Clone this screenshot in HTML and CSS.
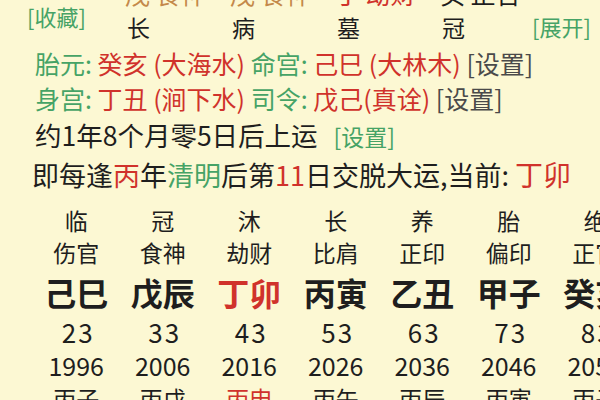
FILE: index.html
```html
<!DOCTYPE html>
<html>
<head>
    <meta charset="utf-8">
    <title>排盘</title>
    <link rel="stylesheet" href="styles.css">
</head>
<body>
    <div class="chart">
        <div class="pillars">
            <a class="link fav">[收藏]</a>
            <div class="tail c1 brown">戊 食神</div>
            <div class="tail c2 brown">戊 食神</div>
            <div class="tail c3 red">丁 劫财</div>
            <div class="tail c4">癸 正官</div>
            <div class="stage c1">长</div>
            <div class="stage c2">病</div>
            <div class="stage c3">墓</div>
            <div class="stage c4">冠</div>
            <a class="link expand">[展开]</a>
        </div>

        <div class="info">
            <div class="line l1"><span class="green">胎元:</span> <span class="red">癸亥 (大海水)</span> <span class="green">命宫:</span> <span class="red">己巳 (大林木)</span> <span class="gray">[设置]</span></div>
            <div class="line l2"><span class="green">身宫:</span> <span class="red">丁丑 (涧下水)</span> <span class="green">司令:</span> <span class="red">戊己(真诠)</span> <span class="gray">[设置]</span></div>
            <div class="line l3">约1年8个月零5日后上运 <span class="green small">[设置]</span></div>
            <div class="line l4">即每逢<span class="red">丙</span>年<span class="green">清明</span>后第<span class="red">11</span>日交脱大运,当前: <span class="red big">丁卯</span></div>
        </div>

        <div class="luck">
            <div class="row r-stage">
                <div>临</div><div>冠</div><div>沐</div><div>长</div><div>养</div><div>胎</div><div>绝</div>
            </div>
            <div class="row r-god">
                <div>伤官</div><div>食神</div><div>劫财</div><div>比肩</div><div>正印</div><div>偏印</div><div>正官</div>
            </div>
            <div class="row r-gz">
                <div>己巳</div><div>戊辰</div><div class="red">丁卯</div><div>丙寅</div><div>乙丑</div><div>甲子</div><div>癸亥</div>
            </div>
            <div class="row r-age">
                <div>23</div><div>33</div><div>43</div><div>53</div><div>63</div><div>73</div><div>83</div>
            </div>
            <div class="row r-year">
                <div>1996</div><div>2006</div><div>2016</div><div>2026</div><div>2036</div><div>2046</div><div>2056</div>
            </div>
            <div class="row r-ln">
                <div>丙子</div><div>丙戌</div><div class="red">丙申</div><div>丙午</div><div>丙辰</div><div>丙寅</div><div>丙子</div>
            </div>
        </div>
    </div>
</body>
</html>
```

FILE: styles.css
```css
* {
    box-sizing: border-box;
}

html, body {
    margin: 0;
    padding: 0;
}

body {
    width: 600px;
    height: 400px;
    overflow: hidden;
    background: #fcf8d3;
    font-family: "Noto Sans CJK SC", "Noto Sans", sans-serif;
    color: #1e1e1e;
}

.red { color: #d0322b; }
.green { color: #46a366; }
.brown { color: #c4894a; }
.gray { color: #4a4a4a; }

/* four pillars header (top is scrolled off) */
.pillars {
    display: grid;
    grid-template-columns: 98px 105px 105px 105px 92px 1fr;
    grid-template-rows: 22px 38px;
    padding-left: 27px;
    padding-right: 10px;
    margin-top: -14px;
}

.tail {
    grid-row: 1;
    align-self: start;
    font-size: 25px;
    line-height: 14px;
    white-space: nowrap;
}

.stage {
    grid-row: 2;
    font-size: 23px;
    line-height: 38px;
    padding-left: 2px;
}

.c1 { grid-column: 2; }
.c2 { grid-column: 3; }
.c3 { grid-column: 4; }
.c4 { grid-column: 5; }

.link {
    color: #46a366;
    font-size: 22px;
    line-height: 24px;
    white-space: nowrap;
}

.fav {
    grid-column: 1;
    grid-row: 1 / 3;
    align-self: start;
    margin-top: 18px;
}

.expand {
    grid-column: 6;
    grid-row: 1 / 3;
    justify-self: end;
    align-self: start;
    margin-top: 28px;
}

/* info lines */
.info {
    padding-left: 35px;
}

.line {
    white-space: nowrap;
    font-size: 25px;
}

.l1 { height: 35px; line-height: 35px; }
.l2 { height: 35px; line-height: 35px; }
.l3 { height: 37px; line-height: 37px; font-size: 26.5px; }
.l4 { height: 43px; line-height: 43px; font-size: 27px; margin-left: -3px; }

.small { font-size: 23px; line-height: 1; margin-left: 10px; }
.big { font-size: 28px; line-height: 1; }

/* luck pillars */
.luck {
    padding-left: 33px;
    padding-top: 4px;
}

.row {
    display: grid;
    grid-template-columns: repeat(7, 86.5px);
    text-align: center;
    white-space: nowrap;
}

.r-stage { font-size: 23px; height: 40px; line-height: 40px; }
.r-god { font-size: 23px; height: 24px; line-height: 24px; }
.r-gz { font-size: 32px; font-weight: bold; height: 56px; line-height: 56px; }
.r-age { font-size: 26px; height: 24px; line-height: 24px; letter-spacing: 2px; padding-left: 2px; }
.r-year { font-size: 25px; height: 43px; line-height: 43px; }
.r-ln { font-size: 23px; height: 22px; line-height: 22px; }
```
